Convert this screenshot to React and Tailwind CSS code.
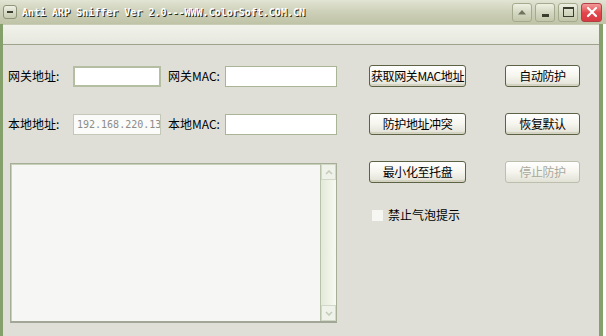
const cjk = { fontFamily: '"Noto Sans CJK SC", "Noto Sans", sans-serif' }

function TitleButton({ children, close }) {
  return (
    <div
      className={
        close
          ? 'w-[21px] h-[19px] rounded-[3px] border border-[#b04048] bg-gradient-to-b from-[#f29a9a] via-[#e2484e] to-[#d83a40] flex items-center justify-center'
          : 'w-[20px] h-[19px] rounded-[3px] border border-[#a4aa8e] bg-gradient-to-b from-[#eef0e2] via-[#d4d8c2] to-[#c2c7ab] flex items-center justify-center'
      }
    >
      {children}
    </div>
  )
}

function TitleBar() {
  return (
    <div className="h-[24px] flex items-center bg-gradient-to-b from-[#e2e4d4] via-[#cdd0b8] to-[#bfc3a6] pl-[3px] pr-[4px]">
      <div className="w-[14px] h-[14px] rounded-[3px] border border-[#8e9478] bg-gradient-to-b from-[#eef0e4] to-[#c6caae] flex items-center justify-center">
        <div className="w-[6px] h-[2px] bg-[#3c3f30]" />
      </div>
      <span
        className="ml-[5px] text-[10px] font-bold text-white whitespace-nowrap"
        style={{ fontFamily: '"DejaVu Sans Mono", monospace', textShadow: '1px 1px 0 #2a2c20' }}
      >
        Anti ARP Sniffer Ver 2.0---WWW.ColorSoft.COM.CN
      </span>
      <div className="ml-auto flex gap-[3px]">
        <TitleButton>
          <svg width="10" height="6" viewBox="0 0 10 6"><path d="M1 5.5 L5 1 L9 5.5 Z" fill="#6f735e" /></svg>
        </TitleButton>
        <TitleButton>
          <div className="w-[7px] h-[3px] bg-[#3a3d2e] mt-[7px]" />
        </TitleButton>
        <TitleButton>
          <div className="w-[11px] h-[10px] border border-[#3a3d2e] border-t-2" />
        </TitleButton>
        <TitleButton close>
          <svg width="12" height="12" viewBox="0 0 12 12">
            <path d="M2 2 L10 10 M10 2 L2 10" stroke="#fff" strokeWidth="2.2" strokeLinecap="round" />
          </svg>
        </TitleButton>
      </div>
    </div>
  )
}

function Button({ children, disabled, w = 'w-[97px]' }) {
  return (
    <div
      className={
        w +
        ' h-[22px] rounded-[3px] border flex items-center justify-center whitespace-nowrap text-[12px] tracking-[-0.4px] bg-gradient-to-b from-[#ffffff] via-[#f6f5ee] to-[#e2e1d6] ' +
        (disabled
          ? 'border-[#bcbfae] text-[#a9aa9e]'
          : 'border-[#5c6244] text-black shadow-[inset_0_-2px_0_#d4d2c0]')
      }
      style={cjk}
    >
      {children}
    </div>
  )
}

function Field({ label, w, labelW, children, focus, gray }) {
  return (
    <div className="flex items-center">
      <span className={labelW + ' text-[12px] text-black whitespace-nowrap'} style={cjk}>
        {label}
      </span>
      <div
        className={
          w +
          ' h-[21px] flex items-center px-[3px] overflow-hidden whitespace-nowrap ' +
          (focus
            ? 'border-2 border-[#b4bea2] bg-white'
            : gray
            ? 'border border-[#c4c8b8] bg-[#fbfbf9]'
            : 'border border-[#a9b696] bg-white')
        }
      >
        {children}
      </div>
    </div>
  )
}

export default function App() {
  return (
    <div className="w-[606px] h-[336px] bg-white flex flex-col overflow-hidden">
      <TitleBar />
      <div className="flex-1 flex flex-col border-l-[3px] border-r-[4px] border-[#86a06c] mr-[3px] bg-[#dfdfd7]">
        <div className="h-[21px] bg-gradient-to-b from-[#f1f2ea] to-[#e6e8de] border-t border-[#c9cdb8] border-b border-b-[#9ea48c]" />
        <div className="flex flex-col pl-[5px] pt-[20px]">
          <div className="flex items-center h-[22px]">
            <Field label="网关地址:" labelW="w-[65px]" w="w-[88px]" focus />
            <div className="w-[7px]" />
            <Field label="网关MAC:" labelW="w-[57px]" w="w-[112px]" />
            <div className="w-[32px]" />
            <Button>获取网关MAC地址</Button>
            <div className="w-[39px]" />
            <Button w="w-[75px]">自动防护</Button>
          </div>
          <div className="flex items-center h-[22px] mt-[26px]">
            <Field label="本地地址:" labelW="w-[65px]" w="w-[88px]" gray>
              <span className="text-[10px] text-[#8c8c88]" style={{ fontFamily: '"DejaVu Sans Mono", monospace' }}>
                192.168.220.13
              </span>
            </Field>
            <div className="w-[7px]" />
            <Field label="本地MAC:" labelW="w-[57px]" w="w-[112px]" />
            <div className="w-[32px]" />
            <Button>防护地址冲突</Button>
            <div className="w-[39px]" />
            <Button w="w-[75px]">恢复默认</Button>
          </div>
          <div className="flex mt-[26px]">
            <div className="ml-[2px] mt-[2px] w-[327px] h-[160px] flex border border-[#a6ae98] border-b-2 border-b-[#a2a696] bg-[#f6f6f4]">
              <div className="flex-1 border-l border-t border-[#c7d0b8]" />
              <div className="w-[16px] flex flex-col bg-gradient-to-r from-[#e4ead8] to-[#f6f9f2] border-l border-[#b8c2a8]">
                <div className="h-[16px] border border-[#d2d8c8] bg-[#eef2e8] flex items-center justify-center">
                  <svg width="8" height="5" viewBox="0 0 8 5"><path d="M1 4 L4 1 L7 4" stroke="#c4cbba" strokeWidth="1.5" fill="none" /></svg>
                </div>
                <div className="flex-1" />
                <div className="h-[16px] border border-[#d2d8c8] bg-[#eef2e8] flex items-center justify-center">
                  <svg width="8" height="5" viewBox="0 0 8 5"><path d="M1 1 L4 4 L7 1" stroke="#c4cbba" strokeWidth="1.5" fill="none" /></svg>
                </div>
              </div>
            </div>
            <div className="ml-[32px] flex flex-col">
              <Button>最小化至托盘</Button>
              <div className="flex items-center mt-[23px] ml-[3px]">
                <div className="w-[11px] h-[11px] bg-[#f6f6f2]" />
                <span className="ml-[5px] text-[12px] text-black" style={cjk}>禁止气泡提示</span>
              </div>
            </div>
            <div className="ml-[39px]">
              <Button w="w-[75px]" disabled>停止防护</Button>
            </div>
          </div>
        </div>
      </div>
    </div>
  )
}
